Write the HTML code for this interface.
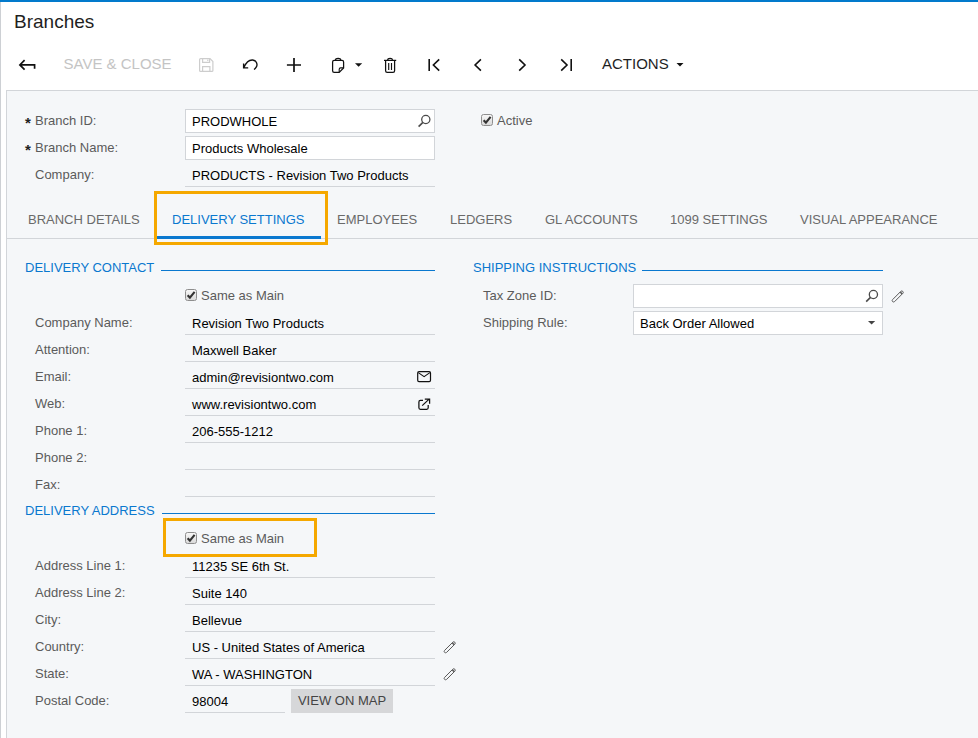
<!DOCTYPE html>
<html lang="en">
<head>
<meta charset="utf-8">
<title>Branches</title>
<style>
*{box-sizing:border-box;margin:0;padding:0}
html,body{width:978px;height:738px;overflow:hidden;background:#fff}
body{font-family:"Liberation Sans",Arial,sans-serif;font-size:13px;color:#000;position:relative}
.topbar{position:absolute;left:0;top:0;width:978px;height:2px;background:#027acc}
.leftstrip{position:absolute;left:0;top:2px;width:1px;height:736px;background:#cdd0d4}
.title{position:absolute;left:14px;top:11px;font-size:19px;line-height:22px;color:#1f1f1f}
.tb{position:absolute;top:54px;height:20px;line-height:20px;font-size:15px;white-space:nowrap}
.tb.dis{color:#c4c4c4}
.ico{position:absolute}
.panel{position:absolute;left:6px;top:90px;width:1000px;height:700px;background:#f5f7f9;border:1px solid #d2d5d9}
.lbl{position:absolute;margin-top:1px;color:#5b5b5b;font-size:13px;line-height:16px;white-space:nowrap}
.req{position:absolute;color:#222;font-size:15px;font-weight:bold;line-height:16px}
.inp{position:absolute;height:24px;border:1px solid #d2d5d9;background:#fff;font-size:13px;line-height:22px;padding-top:1px;padding-left:6px;white-space:nowrap;color:#000}
.ro{position:absolute;height:24px;border-bottom:1px solid #d2d5d9;font-size:13px;line-height:24px;padding-top:1px;padding-left:7px;white-space:nowrap;color:#000}
.sec{position:absolute;margin-top:1px;color:#0a78cf;font-size:13px;line-height:16px;white-space:nowrap}
.secline{position:absolute;height:1px;background:#0a78cf}
.tab{position:absolute;top:212px;font-size:13px;line-height:16px;color:#6a6a6a;white-space:nowrap}
.tab.act{color:#0a78cf}
.tabline{position:absolute;left:7px;top:238px;width:971px;height:1px;background:#d2d5d9}
.tabact{position:absolute;left:157px;top:236px;width:164px;height:3px;background:#0a78cf}
.hl{position:absolute;border:3px solid #f5a800}
.cb{position:absolute;width:12px;height:12px;border:1px solid #8e8e8e;border-radius:2.5px;background:linear-gradient(#f7f7f7,#dadada)}
.cb svg{position:absolute;left:-1px;top:-1px}
.btn{position:absolute;background:#d6d7d9;color:#444;font-size:13px;line-height:24px;text-align:center}
</style>
</head>
<body>
<div class="topbar"></div>
<div class="leftstrip"></div>
<div class="title">Branches</div>

<!-- toolbar -->
<div class="tb dis" style="left:63.5px">SAVE &amp; CLOSE</div>
<div class="tb" style="left:602px;color:#1f1f1f">ACTIONS</div>

<div class="panel"></div>

<!-- header fields -->
<div class="req" style="left:25px;top:115px">*</div>
<div class="lbl" style="left:35px;top:112px">Branch ID:</div>
<div class="inp" style="left:185px;top:109px;width:250px">PRODWHOLE</div>
<div class="req" style="left:25px;top:142px">*</div>
<div class="lbl" style="left:35px;top:139px">Branch Name:</div>
<div class="inp" style="left:185px;top:136px;width:250px">Products Wholesale</div>
<div class="lbl" style="left:35px;top:166px">Company:</div>
<div class="ro" style="left:185px;top:163px;width:250px">PRODUCTS - Revision Two Products</div>
<div class="cb" style="left:481px;top:114px"><svg width="12" height="12" viewBox="0 0 12 12"><path d="M2.6 6.2 L4.9 8.6 L9.6 2.8" fill="none" stroke="#333" stroke-width="2.1"/></svg></div>
<div class="lbl" style="left:497px;top:112px">Active</div>

<!-- tabs -->
<div class="tabline"></div>
<div class="tab" style="left:28px">BRANCH DETAILS</div>
<div class="tab act" style="left:172px">DELIVERY SETTINGS</div>
<div class="tab" style="left:337px">EMPLOYEES</div>
<div class="tab" style="left:450px">LEDGERS</div>
<div class="tab" style="left:545px">GL ACCOUNTS</div>
<div class="tab" style="left:670px">1099 SETTINGS</div>
<div class="tab" style="left:800px">VISUAL APPEARANCE</div>
<div class="tabact"></div>
<div class="hl" style="left:154px;top:191px;width:174px;height:54px"></div>

<!-- delivery contact -->
<div class="sec" style="left:25px;top:259px">DELIVERY CONTACT</div>
<div class="secline" style="left:161px;top:270px;width:274px"></div>
<div class="cb" style="left:185px;top:289px"><svg width="12" height="12" viewBox="0 0 12 12"><path d="M2.6 6.2 L4.9 8.6 L9.6 2.8" fill="none" stroke="#333" stroke-width="2.1"/></svg></div>
<div class="lbl" style="left:201px;top:287px">Same as Main</div>

<div class="lbl" style="left:35px;top:314px">Company Name:</div>
<div class="ro" style="left:185px;top:311px;width:250px">Revision Two Products</div>
<div class="lbl" style="left:35px;top:341px">Attention:</div>
<div class="ro" style="left:185px;top:338px;width:250px">Maxwell Baker</div>
<div class="lbl" style="left:35px;top:368px">Email:</div>
<div class="ro" style="left:185px;top:365px;width:250px">admin@revisiontwo.com</div>
<div class="lbl" style="left:35px;top:395px">Web:</div>
<div class="ro" style="left:185px;top:392px;width:250px">www.revisiontwo.com</div>
<div class="lbl" style="left:35px;top:422px">Phone 1:</div>
<div class="ro" style="left:185px;top:419px;width:250px">206-555-1212</div>
<div class="lbl" style="left:35px;top:449px">Phone 2:</div>
<div class="ro" style="left:185px;top:446px;width:250px"></div>
<div class="lbl" style="left:35px;top:476px">Fax:</div>
<div class="ro" style="left:185px;top:473px;width:250px"></div>

<!-- delivery address -->
<div class="sec" style="left:25px;top:502px">DELIVERY ADDRESS</div>
<div class="secline" style="left:162px;top:513px;width:273px"></div>
<div class="cb" style="left:185px;top:532px"><svg width="12" height="12" viewBox="0 0 12 12"><path d="M2.6 6.2 L4.9 8.6 L9.6 2.8" fill="none" stroke="#333" stroke-width="2.1"/></svg></div>
<div class="lbl" style="left:201px;top:530px">Same as Main</div>
<div class="hl" style="left:163px;top:518px;width:154px;height:39px"></div>

<div class="lbl" style="left:35px;top:557px">Address Line 1:</div>
<div class="ro" style="left:185px;top:554px;width:250px">11235 SE 6th St.</div>
<div class="lbl" style="left:35px;top:584px">Address Line 2:</div>
<div class="ro" style="left:185px;top:581px;width:250px">Suite 140</div>
<div class="lbl" style="left:35px;top:611px">City:</div>
<div class="ro" style="left:185px;top:608px;width:250px">Bellevue</div>
<div class="lbl" style="left:35px;top:638px">Country:</div>
<div class="ro" style="left:185px;top:635px;width:250px">US - United States of America</div>
<div class="lbl" style="left:35px;top:665px">State:</div>
<div class="ro" style="left:185px;top:662px;width:250px">WA - WASHINGTON</div>
<div class="lbl" style="left:35px;top:692px">Postal Code:</div>
<div class="ro" style="left:185px;top:689px;width:100px">98004</div>
<div class="btn" style="left:291px;top:689px;width:102px;height:24px">VIEW ON MAP</div>

<!-- shipping instructions -->
<div class="sec" style="left:473px;top:259px">SHIPPING INSTRUCTIONS</div>
<div class="secline" style="left:642px;top:270px;width:241px"></div>
<div class="lbl" style="left:483px;top:287px">Tax Zone ID:</div>
<div class="inp" style="left:633px;top:284px;width:250px"></div>
<div class="lbl" style="left:483px;top:314px">Shipping Rule:</div>
<div class="inp" style="left:633px;top:311px;width:250px">Back Order Allowed</div>


<!-- icons overlay -->
<svg class="ov" width="978" height="738" viewBox="0 0 978 738" style="position:absolute;left:0;top:0" fill="none" stroke-linecap="butt" stroke-linejoin="miter">
 <!-- back -->
 <path d="M24.6 60.2 L19.9 64.9 L24.6 69.6 M20.2 64.9 H34.6 V68.8" stroke="#111" stroke-width="1.7"/>
 <!-- save (disabled) -->
 <g stroke="#cdcdcd" stroke-width="1.2">
  <path d="M200.6 58.6 H210 L212.9 61.5 V70.4 Q212.9 71.4 211.9 71.4 H200.6 Q199.6 71.4 199.6 70.4 V59.6 Q199.6 58.6 200.6 58.6 Z"/>
  <path d="M202.6 58.6 V62.4 H209.6 V58.6 M207.8 59.4 V61"/>
  <path d="M202.6 71.4 V66.6 H209.9 V71.4"/>
 </g>
 <!-- undo -->
 <path d="M243.6 63.4 V67.9 H248.2 M243.9 67.6 C246 62.5 249.5 59.8 252.6 60 C256.5 60.3 258 64.5 256.2 67.2 C255.6 68.2 254.8 69 254 69.5" stroke="#111" stroke-width="1.35"/>
 <!-- plus -->
 <path d="M286.9 65 H301 M294 58 V72" stroke="#111" stroke-width="1.7"/>
 <!-- clipboard -->
 <g stroke="#111" stroke-width="1.25">
  <path d="M334.2 60.4 H342 Q343.6 60.4 343.6 62 V68 L339.2 72.4 H334.2 Q332.6 72.4 332.6 70.8 V62 Q332.6 60.4 334.2 60.4 Z"/>
  <path d="M343.4 67.9 H340.6 Q339.2 67.9 339.2 69.3 V72.2" stroke-width="1.1"/>
  <path d="M335.4 60.2 Q335.6 58.4 338.1 58.4 Q340.6 58.4 340.8 60.2" stroke-width="1.2"/>
 </g>
 <path d="M355 63.2 H362.2 L358.6 66.8 Z" fill="#111" stroke="none"/>
 <!-- trash -->
 <g stroke="#111" stroke-width="1.25">
  <path d="M384 60.4 H396.2"/>
  <path d="M387.6 60.2 Q387.8 58.4 390.1 58.4 Q392.4 58.4 392.6 60.2" stroke-width="1.2"/>
  <path d="M385.6 60.4 V70.8 Q385.6 72.4 387.2 72.4 H393 Q394.6 72.4 394.6 70.8 V60.4"/>
  <path d="M388.7 63 V70 M391.5 63 V70" stroke-width="1.15"/>
 </g>
 <!-- first prev next last -->
 <g stroke="#111" stroke-width="1.6">
  <path d="M429.2 59 V71 M439.2 59.4 L433.4 65 L439.2 70.6"/>
  <path d="M480.9 59.4 L475.1 65 L480.9 70.6"/>
  <path d="M519.2 59.4 L525 65 L519.2 70.6"/>
  <path d="M561.2 59.4 L567 65 L561.2 70.6 M571.2 59 V71"/>
 </g>
 <path d="M676.5 62.9 H683.5 L680 66.4 Z" fill="#111" stroke="none"/>

 <!-- magnifiers -->
 <g stroke="#4a4a4a" stroke-width="1.3">
  <circle cx="425.8" cy="119.5" r="4.1"/><path d="M422.9 122.4 L418.6 126.6" stroke-width="1.6"/>
  <circle cx="873.4" cy="294.5" r="4.1"/><path d="M870.5 297.4 L866.2 301.6" stroke-width="1.6"/>
 </g>
 <!-- mail -->
 <g stroke="#111" stroke-width="1.2">
  <rect x="417.7" y="371.6" width="12.8" height="10" rx="1.3"/>
  <path d="M418.3 372.6 L424.1 376.6 L429.9 372.6" stroke-width="1.1"/>
 </g>
 <!-- external link -->
 <g stroke="#111" stroke-width="1.25">
  <path d="M423 400.4 H420.4 Q418.9 400.4 418.9 401.9 V407.8 Q418.9 409.3 420.4 409.3 H426.7 Q428.2 409.3 428.2 407.8 V405"/>
  <path d="M422.2 405.6 L429.4 398.9 M424.8 399 H429.6 V403.8"/>
 </g>
 <!-- pencils -->
 <g id="pen1" stroke="#5a5a5a" stroke-width="1">
  <path d="M892.6 301.6 Q891.6 300.6 892.6 299.6 L900.8 291.4 Q901.8 290.4 902.8 291.4 Q903.8 292.4 902.8 293.4 L894.6 301.6 Q893.6 302.4 892.6 301.6 Z"/>
  <path d="M900.2 292 L902.2 294" stroke-width="1.6"/>
 </g>
 <use href="#pen1" x="-448" y="350.8"/>
 <use href="#pen1" x="-448" y="377.8"/>
 <!-- dropdown caret -->
 <path d="M868 321 H875.2 L871.6 324.6 Z" fill="#444" stroke="none"/>
</svg>
</body>
</html>
